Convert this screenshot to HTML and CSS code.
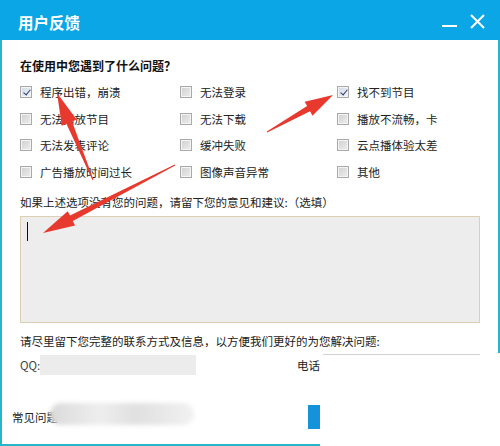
FILE: index.html
```html
<!DOCTYPE html>
<html lang="zh-CN">
<head>
    <meta charset="UTF-8">
    <meta name="viewport" content="width=device-width, initial-scale=1.0">
    <title>用户反馈</title>
<link rel="stylesheet" href="styles.css">
</head>
<body>
<header class="titlebar">
    <h1 class="title">用户反馈</h1>
    <div class="win-btns">
        <span class="btn-min"></span>
        <svg class="btn-close" width="15" height="15" viewBox="0 0 15 15">
            <path d="M1 1 L14 14 M14 1 L1 14" stroke="#fff" stroke-width="2" fill="none"/>
        </svg>
    </div>
</header>

<div class="panel">
    <p class="question">在使用中您遇到了什么问题？</p>
    <div class="options">
        <label class="opt"><span class="box checked"></span>程序出错，崩溃</label>
        <label class="opt"><span class="box"></span>无法登录</label>
        <label class="opt"><span class="box checked"></span>找不到节目</label>
        <label class="opt"><span class="box"></span>无法播放节目</label>
        <label class="opt"><span class="box"></span>无法下载</label>
        <label class="opt"><span class="box"></span>播放不流畅，卡</label>
        <label class="opt"><span class="box"></span>无法发表评论</label>
        <label class="opt"><span class="box"></span>缓冲失败</label>
        <label class="opt"><span class="box"></span>云点播体验太差</label>
        <label class="opt"><span class="box"></span>广告播放时间过长</label>
        <label class="opt"><span class="box"></span>图像声音异常</label>
        <label class="opt"><span class="box"></span>其他</label>
    </div>

    <p class="hint first">如果上述选项没有您的问题，请留下您的意见和建议:（选填）</p>
    <div class="textarea"><span class="caret"></span></div>

    <p class="hint second">请尽里留下您完整的联系方式及信息，以方便我们更好的为您解决问题:</p>
    <div class="contact">
        <span class="qq-label">QQ:</span>
        <div class="field"></div>
        <span class="phone-label">电话</span>
    </div>

    <div class="bottom">
        <span class="faq">常见问题<span class="smudge"></span></span>
        <div class="submit"></div>
    </div>
</div>

<!-- screenshot is cut off here -->
<div class="cover"><div class="cover-line"></div></div>

<svg class="arrows" width="500" height="446" viewBox="0 0 500 446">
    <polygon points="93.5,179.8 72,121.5 76.6,119.5 57,93 61.8,125.7 66.4,123.8 92.5,180.2"/>
    <polygon points="267.2,132.4 310.1,111.3 312.5,115.7 333,95 304.7,101.7 307.1,106.1 266.8,131.6"/>
    <polygon points="174.8,164.6 70,215.6 67.7,211.2 43,233 75.1,225.4 72.8,221 175.2,165.4"/>
</svg>
</body>
</html>
```

FILE: styles.css
```css
body{
    margin: 0;
    width: 500px;
    height: 446px;
    overflow: hidden;
    background: #fff;
    font-family: "Noto Sans CJK SC", "Microsoft YaHei", sans-serif;
    color: #222;
    position: relative;
}

.titlebar{
    height: 40px;
    background: #0ba6e5;
    display: flex;
    flex-direction: row;
    justify-content: space-between;
    align-items: center;
    padding: 3px 15px 0 18px;
    box-sizing: border-box;
}
.title{
    margin: 0;
    color: #fff;
    font-size: 15.5px;
    font-weight: bold;
}
.win-btns{
    display: flex;
    flex-direction: row;
    align-items: center;
    gap: 13px;
}
.btn-min{
    display: block;
    width: 15px;
    height: 2px;
    background: #fff;
    margin-top: 9px;
}
.btn-close{
    display: block;
}

.panel{
    height: 406px;
    box-sizing: border-box;
    border: 2px solid #29b5c8;
    border-top: none;
    padding: 18px 0 0 18px;
}

.question{
    margin: 0;
    font-size: 12px;
    line-height: 16px;
    font-weight: bold;
    color: #111;
}

.options{
    margin-top: 5px;
    display: grid;
    grid-template-columns: 160px 157px 1fr;
    grid-auto-rows: 26.5px;
}
.opt{
    display: flex;
    flex-direction: row;
    align-items: center;
    gap: 8px;
    font-size: 11.5px;
    color: #222;
}
.box{
    width: 12px;
    height: 12px;
    box-sizing: border-box;
    border: 1px solid #a9a9a9;
    background: linear-gradient(135deg, #d0d0d0, #eeeeee);
    box-shadow: inset 0 0 0 1px #f4f4f4;
    position: relative;
}
.box.checked{
    background: linear-gradient(135deg, #d2d9e6, #f0f3f8);
}
.box.checked::after{
    content: "";
    position: absolute;
    left: 3.5px;
    top: 1px;
    width: 3px;
    height: 6px;
    border-right: 1.5px solid #2d3d6e;
    border-bottom: 1.5px solid #2d3d6e;
    transform: rotate(40deg);
}

.hint{
    margin: 0;
    font-size: 11.5px;
    line-height: 16px;
    color: #222;
}
.hint.first{
    margin-top: 9px;
}
.hint.second{
    margin-top: 10px;
}

.textarea{
    margin-top: 6px;
    width: 460px;
    height: 107px;
    box-sizing: border-box;
    border: 1px solid #ddd0b2;
    background: #ededed;
    padding: 5px 6px;
}
.caret{
    display: block;
    width: 1px;
    height: 19px;
    background: #111;
}

.contact{
    margin-top: 6px;
    height: 20px;
    display: flex;
    flex-direction: row;
    align-items: center;
    font-size: 11.5px;
}
.qq-label{
    width: 20px;
    color: #444;
}
.field{
    width: 156px;
    height: 20px;
    background: #ececec;
}
.phone-label{
    margin-left: 101px;
}

.bottom{
    margin-top: 30px;
    margin-left: -8px;
    height: 24px;
    display: grid;
    grid-template-columns: 296px 60px;
    align-items: center;
    font-size: 11.5px;
}
.faq{
    position: relative;
}
.smudge{
    position: absolute;
    left: 38px;
    top: -6px;
    width: 144px;
    height: 22px;
    border-radius: 12px;
    background: linear-gradient(90deg, #dadada 0%, #e6e6e6 20%, #eeeeee 35%, #e0e0e0 60%, #ebebeb 85%, #f2f2f2 100%);
    filter: blur(2px);
}
.submit{
    height: 24px;
    background: #1593da;
}

.cover{
    position: absolute;
    left: 320px;
    top: 353px;
    right: 0;
    bottom: 0;
    background: #fff;
}
.cover-line{
    margin: 1px 0 0 3px;
    width: 157px;
    height: 1px;
    background: #d2d2d2;
}

.arrows{
    position: absolute;
    left: 0;
    top: 0;
    pointer-events: none;
    fill: #e8392f;
}
```
